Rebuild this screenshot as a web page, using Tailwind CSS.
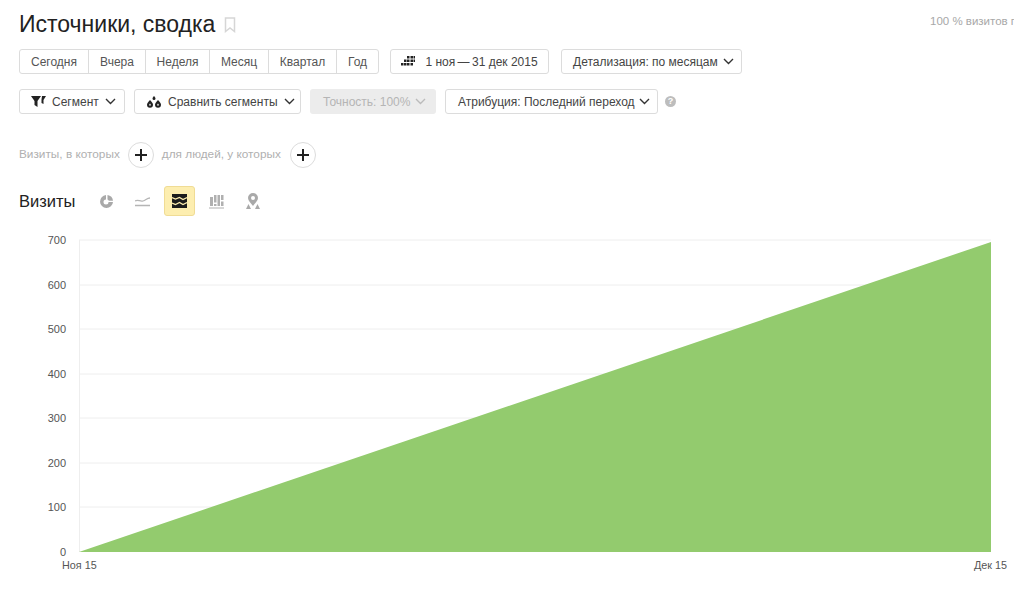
<!DOCTYPE html>
<html lang="ru">
<head>
    <meta charset="UTF-8">
    <title>Источники, сводка</title>
    <script src="https://cdn.jsdelivr.net/npm/@tailwindcss/browser@4"></script>
</head>
<body class="w-[1024px] h-[589px] overflow-hidden bg-white font-['Liberation_Sans',Arial,sans-serif] text-[#333]">
<div class="pl-[19px] pt-[10px]">

    <!-- title -->
    <div class="flex items-center h-[28px] pr-[10px]">
        <h1 class="text-[23px] leading-[28px] text-[#222]">Источники, сводка</h1>
        <svg class="ml-[9px] mt-[2px]" width="12" height="16" viewBox="0 0 12 16" fill="none" stroke="#d6d6d6" stroke-width="1.5"><path d="M1.5 1h9v13.5L6 11l-4.5 3.5z"/></svg>
        <span class="ml-auto whitespace-nowrap w-[84px] overflow-hidden text-[11.5px] text-[#a8a8a8] -mt-[4px]">100 % визитов п</span>
    </div>

    <!-- period row -->
    <div class="flex items-center mt-[11px] text-[12px] h-[25px]">
        <div class="flex h-full border border-[#dcdcdc] rounded-[3px] text-[#555]">
            <span class="w-[69px] flex items-center justify-center border-r border-[#dcdcdc]">Сегодня</span>
            <span class="w-[57px] flex items-center justify-center border-r border-[#dcdcdc]">Вчера</span>
            <span class="w-[64px] flex items-center justify-center border-r border-[#dcdcdc]">Неделя</span>
            <span class="w-[59px] flex items-center justify-center border-r border-[#dcdcdc]">Месяц</span>
            <span class="w-[68px] flex items-center justify-center border-r border-[#dcdcdc]">Квартал</span>
            <span class="w-[41px] flex items-center justify-center">Год</span>
        </div>
        <div class="ml-[11px] w-[159px] h-full flex items-center justify-center gap-[10px] border border-[#dcdcdc] rounded-[3px] text-[#444]">
            <svg width="14" height="11" viewBox="0 0 14 11" fill="#222"><path d="M6 0h2.500v2.500H6zM9.500 0H12v2.500H9.500zM12.500 0H14v2.500h-1.500zM3 3.500h2.500V6H3zM6 3.500h2.500V6H6zM9.500 3.500H12V6H9.500zM12.500 3.500H14V6h-1.500zM0 7h2.500v2.500H0zM3 7h2.500v2.500H3zM6 7h2.500v2.500H6zM9.500 7H12v2.500H9.500z"/></svg>
            <span>1 ноя&#8201;—&#8201;31 дек 2015</span>
        </div>
        <div class="ml-[12px] w-[181px] h-full flex items-center pl-[11px] gap-[5px] border border-[#dcdcdc] rounded-[3px] text-[#444]">
            <span>Детализация: по месяцам</span>
            <svg width="11" height="7" viewBox="0 0 11 7" fill="none" stroke="#333" stroke-width="1.4"><path d="M1 1l4.500 4.500L10 1"/></svg>
        </div>
    </div>

    <!-- segment row -->
    <div class="flex items-center mt-[15px] text-[12px] h-[25px] text-[#444]">
        <div class="w-[106px] h-full flex items-center pl-[11px] gap-[6px] border border-[#dcdcdc] rounded-[3px]">
            <svg width="15" height="11" viewBox="0 0 15 11" fill="#222"><path d="M0 0h10L6.500 5v6l-3-2V5zM11 0h4l-2.500 4v4L10.500 7V3.500z"/></svg>
            <span>Сегмент</span>
            <svg width="11" height="7" viewBox="0 0 11 7" fill="none" stroke="#333" stroke-width="1.4"><path d="M1 1l4.500 4.500L10 1"/></svg>
        </div>
        <div class="ml-[9px] w-[167px] h-full flex items-center pl-[11px] gap-[6px] border border-[#dcdcdc] rounded-[3px]">
            <svg width="16" height="12" viewBox="0 0 16 12" fill="#222"><path d="M4 4c2 2.300 3 3.300 3 4.800a3 3 0 0 1-6 0C1 7.300 2 6.300 4 4zm0 3.600c-.5.600-.8.900-.8 1.300a.8.800 0 0 0 1.600 0c0-.4-.3-.7-.8-1.300zM12 4c2 2.300 3 3.300 3 4.800a3 3 0 0 1-6 0C9 7.300 10 6.300 12 4zm0 3.600c-.5.600-.8.900-.8 1.300a.8.800 0 0 0 1.600 0c0-.4-.3-.7-.8-1.300zM8 0c1 1.300 1.500 1.800 1.500 2.500a1.500 1.500 0 0 1-3 0C6.500 1.800 7 1.300 8 0z" fill-rule="evenodd"/></svg>
            <span>Сравнить сегменты</span>
            <svg width="11" height="7" viewBox="0 0 11 7" fill="none" stroke="#333" stroke-width="1.4"><path d="M1 1l4.500 4.500L10 1"/></svg>
        </div>
        <div class="ml-[9px] w-[126px] h-full flex items-center pl-[13px] gap-[5px] rounded-[3px] bg-[#ececec] text-[#b5b5b5]">
            <span>Точность: 100%</span>
            <svg width="11" height="7" viewBox="0 0 11 7" fill="none" stroke="#bbb" stroke-width="1.4"><path d="M1 1l4.500 4.500L10 1"/></svg>
        </div>
        <div class="ml-[9px] w-[213px] h-full flex items-center pl-[12px] gap-[4px] border border-[#dcdcdc] rounded-[3px]">
            <span>Атрибуция: Последний переход</span>
            <svg width="11" height="7" viewBox="0 0 11 7" fill="none" stroke="#333" stroke-width="1.4"><path d="M1 1l4.500 4.500L10 1"/></svg>
        </div>
        <span class="ml-[7px] w-[11px] h-[11px] rounded-full bg-[#bdbdbd] text-white text-[9px] font-bold flex items-center justify-center">?</span>
    </div>

    <!-- filters row -->
    <div class="flex items-center mt-[28px] h-[26px] text-[11.8px] text-[#b0b0b0]">
        <span>Визиты, в которых</span>
        <span class="ml-[8px] w-[26px] h-[26px] rounded-full border border-[#dcdcdc] flex items-center justify-center">
            <svg width="12" height="12" viewBox="0 0 12 12" stroke="#222" stroke-width="2"><path d="M6 0v12M0 6h12"/></svg>
        </span>
        <span class="ml-[8px]">для людей, у которых</span>
        <span class="ml-[9px] w-[26px] h-[26px] rounded-full border border-[#dcdcdc] flex items-center justify-center">
            <svg width="12" height="12" viewBox="0 0 12 12" stroke="#222" stroke-width="2"><path d="M6 0v12M0 6h12"/></svg>
        </span>
    </div>

    <!-- chart tabs -->
    <div class="flex items-center mt-[18px] h-[30px]">
        <span class="text-[16.5px] text-[#222] w-[72px]">Визиты</span>
        <div class="w-[30px] h-[30px] flex items-center justify-center">
            <svg width="15" height="15" viewBox="0 0 15 15" fill="#a9a9a9"><path fill-rule="evenodd" d="M7 1a6.500 6.500 0 1 0 7 7H9.500A2.500 2.500 0 1 1 7 5.500zM8.500 1v4.500a2.500 2.500 0 0 1 1.300 1.200H14A6.500 6.500 0 0 0 8.500 1z"/></svg>
        </div>
        <div class="ml-[6px] w-[30px] h-[30px] flex items-center justify-center">
            <svg width="15" height="12" viewBox="0 0 15 12" fill="none" stroke="#b5b5b5" stroke-width="1.300"><path d="M0 6c3-2 5 1 8 0s4-3 7-3M0 10.500h15"/></svg>
        </div>
        <div class="ml-[7px] w-[31px] h-[30px] flex items-center justify-center rounded-[3px] bg-[#fdeeb0] border border-[#f0dc95]">
            <svg width="15" height="14" viewBox="0 0 15 14"><rect width="15" height="14" fill="#1c1c1c"/><path d="M0 3.500l3.500 1.500 4-1.500 3.500 2 4-2M0 9l3.500 1.500 4-2 3.500 2 4-2" fill="none" stroke="#fdeeb0" stroke-width="1.300"/></svg>
        </div>
        <div class="ml-[6px] w-[30px] h-[30px] flex items-center justify-center">
            <svg width="15" height="15" viewBox="0 0 15 15" fill="#b0b0b0"><path d="M1 3h3v9H1zM5 1h2.500v7.500H5zM5 10h2.500v2H5zM8.500 1H11v11H8.500zM12 1h2.500v5H12zM12 7.500h2.500V12H12zM0 13.500h15v1H0z"/></svg>
        </div>
        <div class="ml-[7px] w-[30px] h-[30px] flex items-center justify-center">
            <svg width="14" height="16" viewBox="0 0 14 16" fill="#a9a9a9"><path fill-rule="evenodd" d="M7 0a5 5 0 0 1 5 5c0 2.500-3 5.500-5 8-2-2.500-5-5.500-5-8a5 5 0 0 1 5-5zm0 3a2 2 0 1 0 0 4 2 2 0 0 0 0-4z"/><path d="M2.500 11L0 16h5zM11.500 11L14 16H9z"/></svg>
        </div>
    </div>
</div>

<!-- chart -->
<svg class="block" width="1024" height="373" viewBox="0 216 1024 373" font-family="'Liberation Sans', Arial, sans-serif" font-size="11" fill="#555">
    <g stroke="#eeeeee" stroke-width="1">
        <path d="M79 240H991M79 285H991M79 329H991M79 374H991M79 418H991M79 463H991M79 507H991"/>
        <path d="M79.500 240V552"/>
    </g>
    <polygon points="79,552 991,242 991,552" fill="#93cb6e"/>
    <g text-anchor="end">
        <text x="66" y="244">700</text>
        <text x="66" y="289">600</text>
        <text x="66" y="333">500</text>
        <text x="66" y="378">400</text>
        <text x="66" y="422">300</text>
        <text x="66" y="467">200</text>
        <text x="66" y="511">100</text>
        <text x="66" y="556">0</text>
    </g>
    <text x="62" y="569" font-size="10.800">Ноя 15</text>
    <text x="1007" y="569" font-size="10.800" text-anchor="end">Дек 15</text>
</svg>
</body>
</html>
